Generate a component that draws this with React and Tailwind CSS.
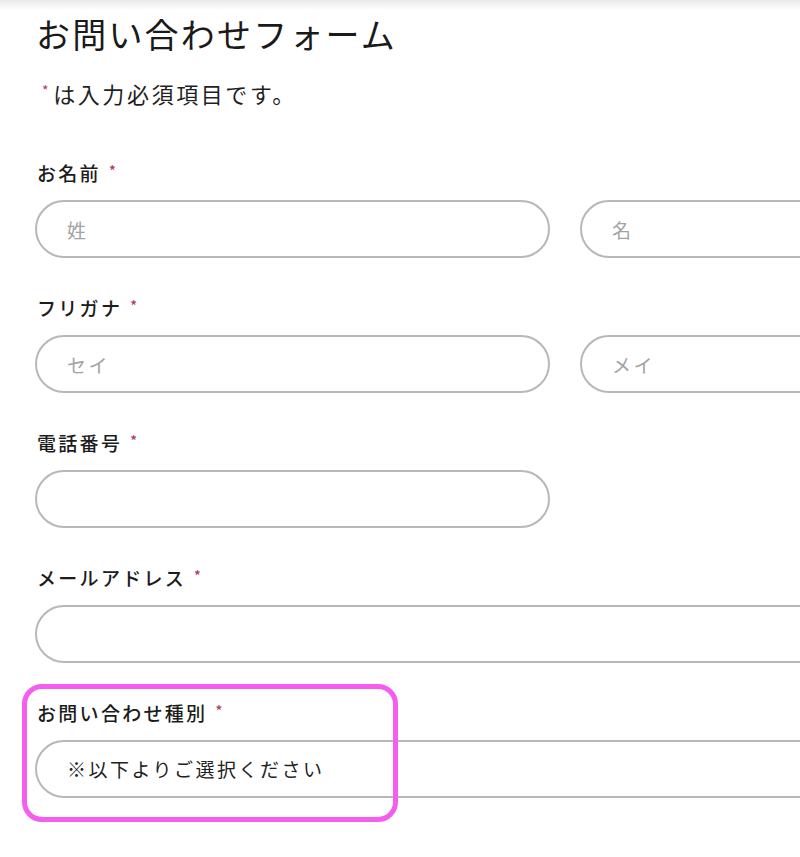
const font = { fontFamily: '"Noto Sans CJK JP", "Noto Sans", sans-serif' };

function Req() {
  return <span className="ml-[8px] relative top-[2px] align-top text-[14px] leading-none text-[#b4375a]">*</span>;
}

function Label({ children }) {
  return (
    <p className="h-[24px] text-[19px] leading-[24px] font-medium tracking-[2.3px] text-[#1c1c1c]">
      {children}
      <Req />
    </p>
  );
}

function Field({ placeholder, className = 'w-[515px]' }) {
  return (
    <input
      className={`h-[58px] ${className} rounded-full border-2 border-[#b8b8b8] bg-white px-[30px] text-[19px] tracking-[2.5px] text-[#222] outline-none placeholder:text-[#a3a3a3]`}
      placeholder={placeholder}
      style={font}
    />
  );
}

export default function App() {
  return (
    <div className="relative h-[857px] w-[800px] overflow-hidden bg-white" style={font}>
      <div className="h-[10px] bg-gradient-to-b from-[#e9e9e9] to-white" />

      <div className="w-[1095px] pl-[35px]">
        <h1 className="mt-[2px] pl-[1px] text-[34px] leading-[44px] font-normal tracking-[2.2px] text-[#1a1a1a]">
          お問い合わせフォーム
        </h1>
        <p className="mt-[22px] h-[30px] pl-[7px] text-[22px] leading-[30px] tracking-[2.6px] text-[#1f1f1f]">
          <span className="relative top-[2px] mr-[2px] align-top text-[14px] leading-[20px] text-[#b4375a]">*</span>
          は入力必須項目です。
        </p>

        <div className="mt-[53px] flex flex-col gap-[38px]">
          <div className="flex flex-col gap-[15px]">
            <div className="pl-[2px]">
              <Label>お名前</Label>
            </div>
            <div className="flex gap-[30px]">
              <Field placeholder="姓" />
              <Field placeholder="名" />
            </div>
          </div>

          <div className="flex flex-col gap-[15px]">
            <div className="pl-[2px]">
              <Label>フリガナ</Label>
            </div>
            <div className="flex gap-[30px]">
              <Field placeholder="セイ" />
              <Field placeholder="メイ" />
            </div>
          </div>

          <div className="flex flex-col gap-[15px]">
            <div className="pl-[2px]">
              <Label>電話番号</Label>
            </div>
            <Field />
          </div>

          <div className="flex flex-col gap-[15px]">
            <div className="pl-[2px]">
              <Label>メールアドレス</Label>
            </div>
            <Field className="w-[1060px]" />
          </div>

          <div className="relative flex flex-col gap-[15px]">
            <div className="pl-[2px]">
              <Label>お問い合わせ種別</Label>
            </div>
            <div className="flex h-[58px] w-[1060px] items-center rounded-full border-2 border-[#b8b8b8] bg-white px-[30px] text-[19px] tracking-[2.5px] text-[#222]">
              ※以下よりご選択ください
            </div>
            <div className="absolute -top-[17px] -left-[13px] h-[138px] w-[376px] rounded-[20px] border-[5px] border-[#f55cf0]" />
          </div>
        </div>
      </div>
    </div>
  );
}
